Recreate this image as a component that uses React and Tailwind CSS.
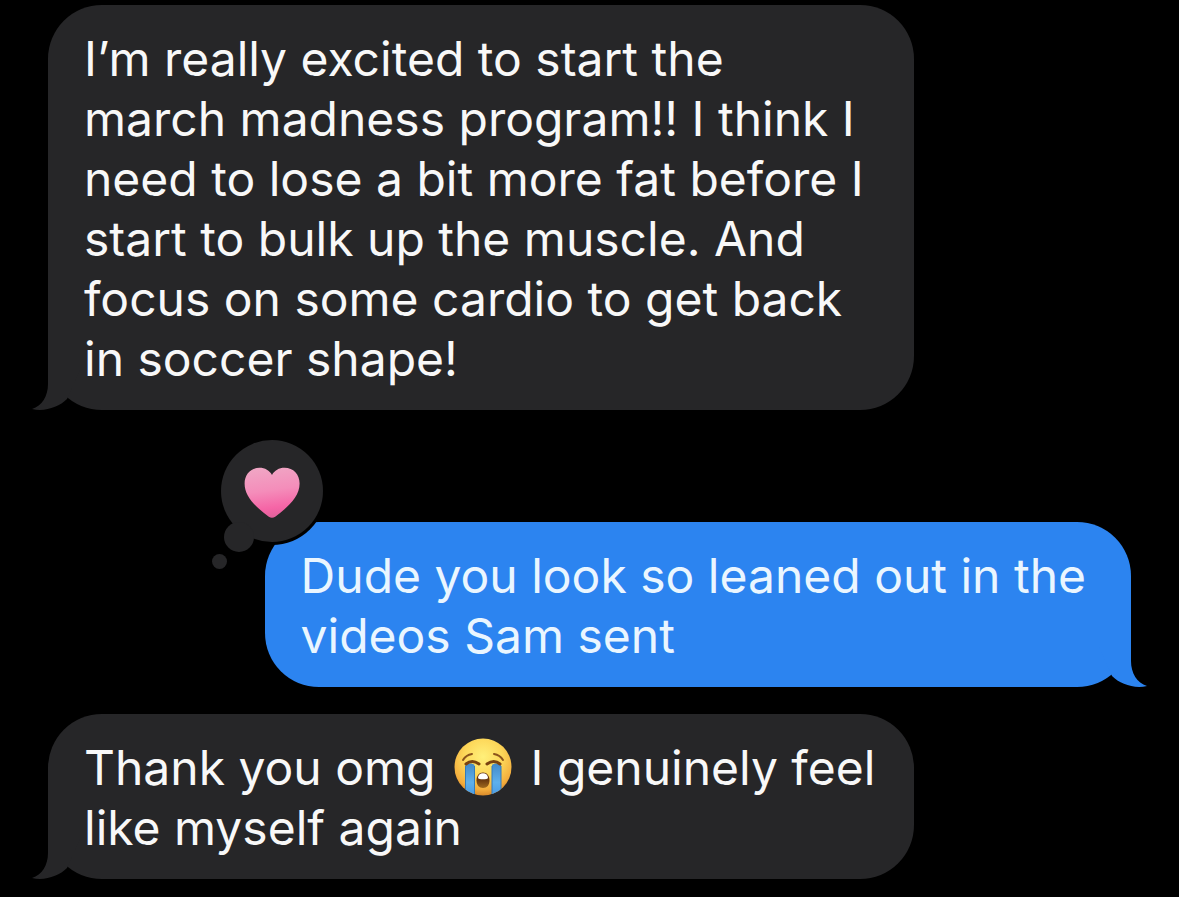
import React from 'react';

const messages = [
  {
    id: 1,
    sent: false,
    spacing: '',
    lines: [
      'I’m really excited to start the',
      'march madness program!! I think I',
      'need to lose a bit more fat before I',
      'start to bulk up the muscle. And',
      'focus on some cardio to get back',
      'in soccer shape!',
    ],
  },
  {
    id: 2,
    sent: true,
    spacing: 'mt-28',
    loved: true,
    lines: ['Dude you look so leaned out in the', 'videos Sam sent'],
  },
  {
    id: 3,
    sent: false,
    spacing: 'mt-[27px]',
    lines: [
      <>Thank you omg <CryingFace /> I genuinely feel</>,
      'like myself again',
    ],
  },
];

////////// crying emoji, sits inline with the text /////////
function CryingFace() {
  return (
    <svg role="img" aria-label="Loudly crying face" viewBox="0 0 58 58" className="inline-block w-[58px] h-[58px] mx-[5px] -mt-[14px] -mb-1 align-middle">
      <defs>
        <radialGradient id="face" cx="0.5" cy="0.32" r="0.68">
          <stop offset="0" stopColor="#fff07a" />
          <stop offset="0.5" stopColor="#fdd658" />
          <stop offset="0.85" stopColor="#f3ad3d" />
          <stop offset="1" stopColor="#d98a2b" />
        </radialGradient>
        <linearGradient id="tear" x1="0" y1="0" x2="0" y2="1">
          <stop offset="0" stopColor="#4389c8" />
          <stop offset="0.6" stopColor="#5eb0ec" />
          <stop offset="1" stopColor="#4a9be4" />
        </linearGradient>
        <linearGradient id="mouth" x1="0" y1="0" x2="0" y2="1">
          <stop offset="0" stopColor="#5e2c0c" />
          <stop offset="0.5" stopColor="#6b3a10" />
          <stop offset="1" stopColor="#a06a1e" />
        </linearGradient>
        <clipPath id="faceClip"><circle cx="29" cy="29" r="28.5" /></clipPath>
      </defs>
      <circle cx="29" cy="29" r="28.5" fill="url(#face)" />
      <g clipPath="url(#faceClip)">
        <path d="M11.500 27c3-2 7-2 9 0v30c-4 0-8-3-9-6z" fill="url(#tear)" />
        <path d="M47 27c-3-2-7-2-9 0v30c4 0 8-3 9-6z" fill="url(#tear)" />
        <path d="M11.500 28v25M20.500 28v28M38 28v28M47 28v25" stroke="#347bb9" strokeWidth="1" fill="none" />
      </g>
      <path d="M9 22q3-5 9-6M49 22q-3-5-9-6" stroke="#8c541b" strokeWidth="2" strokeLinecap="round" fill="none" />
      <path d="M12 26q6-5 13 0M33 26q7-5 13 0" stroke="#7a4310" strokeWidth="3" strokeLinecap="round" fill="none" />
      <path d="M29 34.500c4 0 6.500 3.500 6.500 8s-2.500 7.500-6.500 7.500-6.500-3-6.500-7.500 2.500-8 6.500-8z" fill="url(#mouth)" />
      <path d="M24 40c0-3 2-4.800 5-4.800s5 1.800 5 4.800c0 1.800-10 1.800-10 0z" fill="#fff" />
    </svg>
  );
}

////////// heart tapback over the corner of the bubble /////////
function HeartReaction() {
  return (
    <svg role="img" aria-label="Loved" viewBox="0 0 120 136" className="absolute -left-[57px] -top-[86px] w-[120px] h-[136px]">
      <defs>
        <linearGradient id="heart" x1="0.4" y1="0" x2="0.55" y2="1">
          <stop offset="0" stopColor="#f0a5c4" />
          <stop offset="0.45" stopColor="#f48dba" />
          <stop offset="0.8" stopColor="#f565a6" />
          <stop offset="1" stopColor="#e0609a" />
        </linearGradient>
      </defs>
      <circle cx="64" cy="55" r="54" fill="#000" />
      <g fill="#262628">
        <circle cx="64" cy="55" r="51" />
        <circle cx="31" cy="101" r="15" />
        <circle cx="11.500" cy="125.500" r="7.500" />
      </g>
      <path d="M64 39C61.500 34.500 57 31.800 51.500 31.800C42.500 31.800 36.600 38.500 36.600 47.500C36.600 61 48.500 71.500 60.800 80.700Q64 83 67.200 80.700C79.500 71.500 91.600 61 91.600 47.500C91.600 38.500 85.500 31.800 76.500 31.800C71 31.800 66.500 34.500 64 39Z" fill="url(#heart)" />
    </svg>
  );
}

function Tail({ sent }) {
  return (
    <svg
      aria-hidden="true"
      viewBox="0 0 48 60"
      className={`absolute bottom-0 w-12 h-[60px] ${sent ? '-right-4 -scale-x-100 text-[#2c84f0]' : '-left-4 text-[#262628]'}`}>
      <path d="M16 0V34C16 46 10 56 0 59C13 62 27 57 35 49L48 20V0Z" fill="currentColor" />
    </svg>
  );
}

function Bubble({ message }) {
  const { sent, loved, lines, spacing } = message;

  return (
    <li className={`relative w-4/5 rounded-[54px] px-9 pt-6 pb-[21px] ${spacing} ${sent ? 'self-end bg-[#2c84f0] text-[#eaf6ff]' : 'self-start bg-[#262628] text-[#f8f8f8]'}`}>
      <Tail sent={sent} />
      <p className="relative text-[48px] leading-[60px]">
        {lines.map((line, i) => (
          <span key={i} className="block">{line}</span>
        ))}
      </p>
      {loved ? <HeartReaction /> : ''}
    </li>
  );
}

const App = () => {
  return (
    <main className="min-h-screen bg-black font-['Inter',sans-serif]">
      <ul className="flex flex-col px-12 pt-[5px] pb-4">
        {messages.map((message) => (
          <Bubble key={message.id} message={message} />
        ))}
      </ul>
    </main>
  );
};

export default App;
